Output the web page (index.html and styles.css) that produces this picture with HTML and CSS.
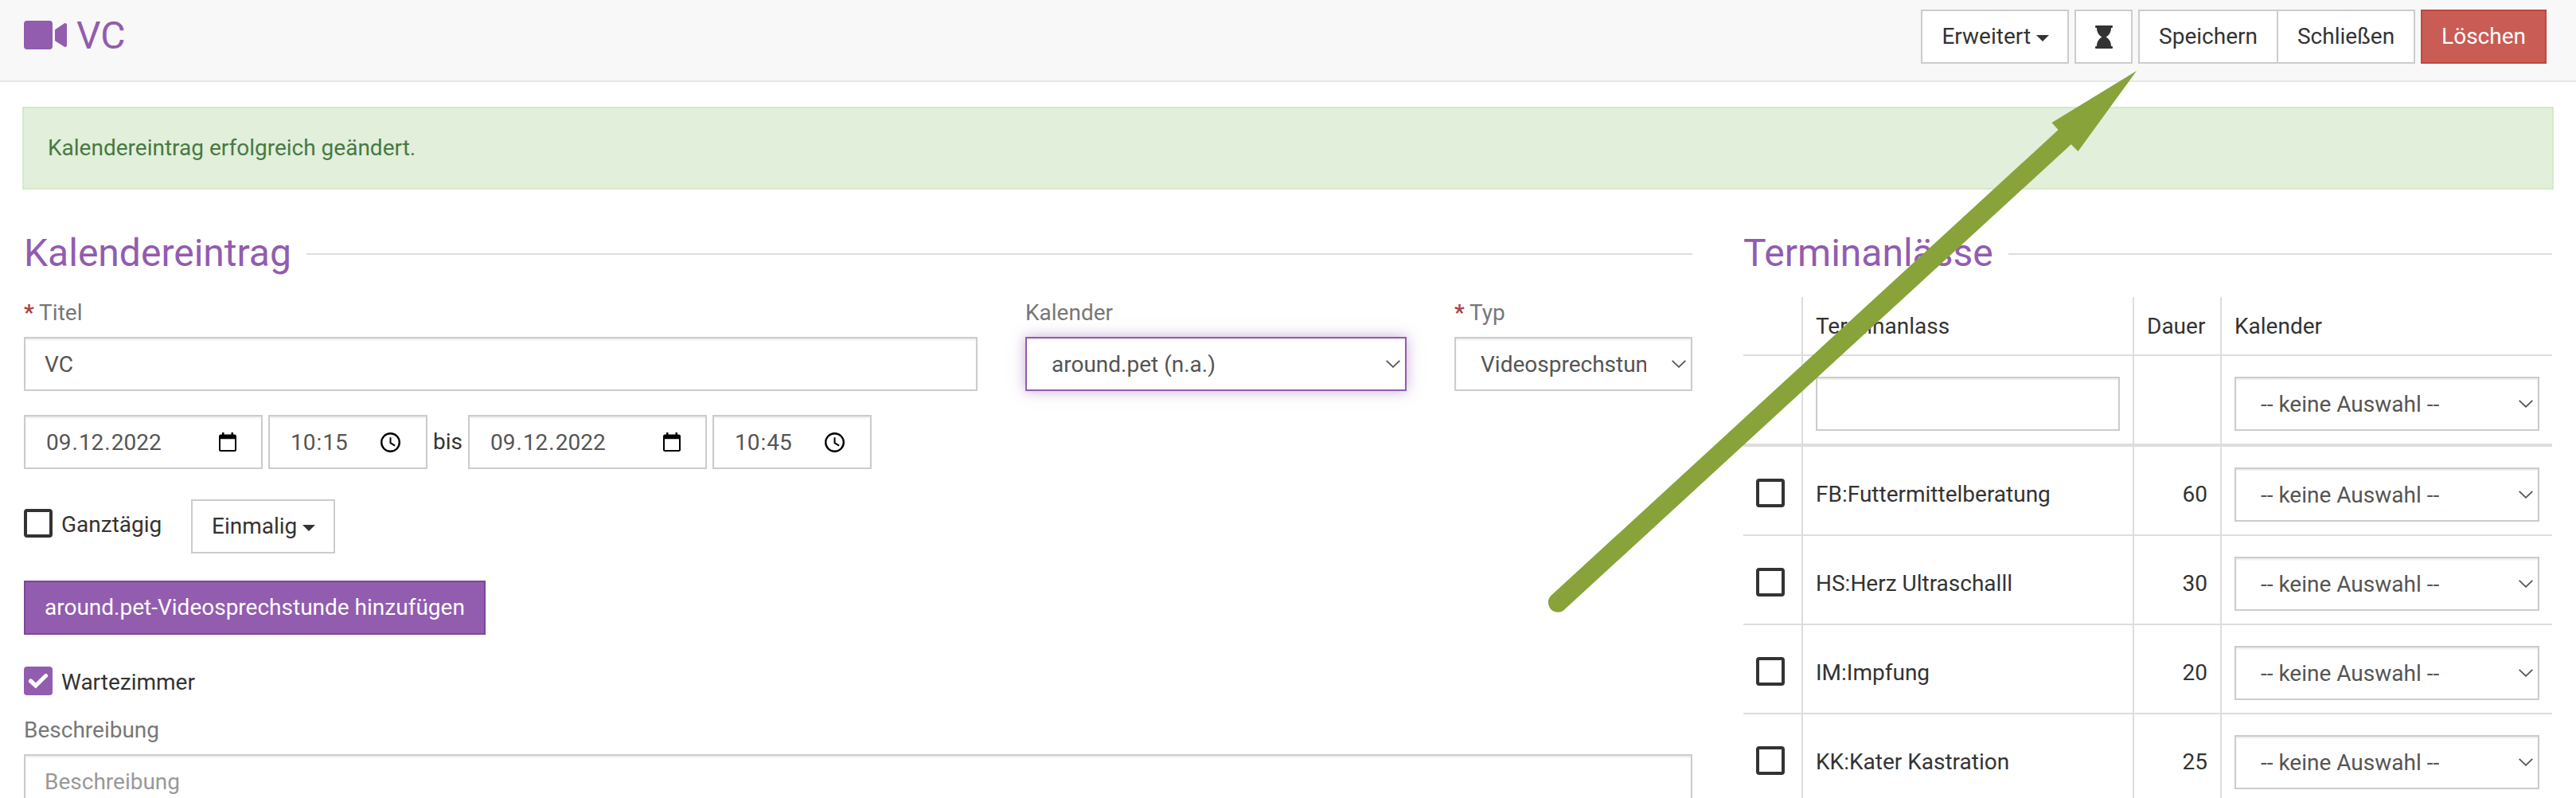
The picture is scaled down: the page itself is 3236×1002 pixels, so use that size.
FILE: index.html
```html
<!DOCTYPE html>
<html lang="de">
<head>
<meta charset="utf-8">
<title>VC</title>
<link rel="stylesheet" href="styles.css">
</head>
<body>
<svg class="defs" width="0" height="0">
  <symbol id="chevron" viewBox="0 0 18 10"><path d="M.7.8 9 8.8 17.300.8" fill="none" stroke="#555" stroke-width="1.8"/></symbol>
  <symbol id="date" viewBox="0 0 22 24"><path d="M4 0h2.500v2.500h9V0H18v2.500h1.500A2.500 2.500 0 0 1 22 5v16.500a2.500 2.500 0 0 1-2.500 2.500h-17A2.500 2.500 0 0 1 0 21.500V5a2.500 2.500 0 0 1 2.500-2.500H4zM2 8.300V22h18V8.300z"/></symbol>
  <symbol id="clock" viewBox="0 0 25 25"><circle cx="12.500" cy="12.500" r="11.300" fill="none" stroke="#000" stroke-width="2.400"/><path d="M12.500 6.200v7l5.600 3.500" fill="none" stroke="#000" stroke-width="2"/></symbol>
</svg>
<header class="topbar">
  <h1 class="brand">
    <svg width="54" height="36" viewBox="0 0 54 36"><rect width="36" height="36" rx="4"/><path d="M39 12.300a2 2 0 0 1 .8-1.600L50.500 3.500A2.200 2.200 0 0 1 54 5.300v25.400a2.200 2.200 0 0 1-3.500 1.800L39.800 25.800a2 2 0 0 1-.8-1.600z"/></svg>
    <span>VC</span>
  </h1>
  <div class="toolbar">
    <button class="btn">Erweitert<i class="caret"></i></button>
    <button class="btn btn-icon"><svg width="22" height="29" viewBox="0 0 22 29"><path d="M1.200 0h19.600a1.200 1.200 0 0 1 0 3H20c0 6-3 9.500-6.500 11.500C17 16.500 20 20 20 26h.8a1.200 1.200 0 0 1 0 3H1.200a1.200 1.200 0 0 1 0-3H2c0-6 3-9.500 6.500-11.500C5 12.500 2 9 2 3h-.8a1.200 1.200 0 0 1 0-3z" fill="#333"/></svg></button>
    <div class="group"><button class="btn">Speichern</button><button class="btn">Schließen</button></div>
    <button class="btn btn-danger">Löschen</button>
  </div>
</header>
<div class="alert">Kalendereintrag erfolgreich geändert.</div>
<main class="columns">
  <section class="entry">
    <h2 class="legend">Kalendereintrag</h2>
    <div class="fields">
      <div class="field"><label><b>*</b> Titel</label><div class="input">VC</div></div>
      <div class="field"><label>Kalender</label><div class="input select focused"><span>around.pet (n.a.)</span><svg class="chev"><use href="#chevron"/></svg></div></div>
      <div class="field"><label><b>*</b> Typ</label><div class="input select"><span>Videosprechstunde</span><svg class="chev"><use href="#chevron"/></svg></div></div>
    </div>
    <div class="period">
      <div class="input date"><span>09<i>.</i>12<i>.</i>2022</span><svg width="22" height="24"><use href="#date"/></svg></div>
      <div class="input time"><span>10<i>:</i>15</span><svg width="25" height="25"><use href="#clock"/></svg></div>
      <span class="until">bis</span>
      <div class="input date"><span>09<i>.</i>12<i>.</i>2022</span><svg width="22" height="24"><use href="#date"/></svg></div>
      <div class="input time"><span>10<i>:</i>45</span><svg width="25" height="25"><use href="#clock"/></svg></div>
    </div>
    <div class="repeat">
      <div class="check-row"><i class="check"></i><span>Ganztägig</span></div>
      <button class="btn">Einmalig<i class="caret"></i></button>
    </div>
    <button class="btn btn-primary">around.pet-Videosprechstunde hinzufügen</button>
    <div class="check-row waiting"><i class="check checked"><svg width="26" height="20" viewBox="0 0 26 20"><path d="m3.500 10 6.300 6L22.500 3.500" fill="none" stroke="#fff" stroke-width="5.200" stroke-linecap="round"/></svg></i><span>Wartezimmer</span></div>
    <label class="desc-label">Beschreibung</label>
    <div class="input textarea">Beschreibung</div>
  </section>
  <section class="reasons">
    <h2 class="legend">Terminanlässe</h2>
    <div class="table">
      <div class="row head"><div></div><div>Terminanlass</div><div>Dauer</div><div>Kalender</div></div>
      <div class="row filter"><div></div><div><div class="input"></div></div><div></div><div><div class="input select"><span>-- keine Auswahl --</span><svg class="chev"><use href="#chevron"/></svg></div></div></div>
      <div class="row"><div><i class="check"></i></div><div>FB:Futtermittelberatung</div><div class="num">60</div><div><div class="input select"><span>-- keine Auswahl --</span><svg class="chev"><use href="#chevron"/></svg></div></div></div>
      <div class="row"><div><i class="check"></i></div><div>HS:Herz Ultraschalll</div><div class="num">30</div><div><div class="input select"><span>-- keine Auswahl --</span><svg class="chev"><use href="#chevron"/></svg></div></div></div>
      <div class="row"><div><i class="check"></i></div><div>IM:Impfung</div><div class="num">20</div><div><div class="input select"><span>-- keine Auswahl --</span><svg class="chev"><use href="#chevron"/></svg></div></div></div>
      <div class="row"><div><i class="check"></i></div><div>KK:Kater Kastration</div><div class="num">25</div><div><div class="input select"><span>-- keine Auswahl --</span><svg class="chev"><use href="#chevron"/></svg></div></div></div>
    </div>
  </section>
</main>
<svg class="arrow" width="760" height="700" viewBox="1940 80 760 700"><path d="M1957 756.500 2596 170" stroke="#88a33a" stroke-width="24.300" stroke-linecap="round"/><path d="M2684 89 2577.500 154 2586 163.500 2602 181.500 2610.500 190z" fill="#88a33a"/></svg>
</body>
</html>
```
FILE: styles.css
```css
* { box-sizing: border-box; }
body {
  margin: 0;
  height: 1002px;
  overflow: hidden;
  position: relative;
  background: #fff;
  color: #333;
  font: 28px/40px Roboto, "Liberation Sans", sans-serif;
}
.defs { position: absolute; }
svg { display: block; flex: none; }
.topbar {
  height: 103px;
  padding: 12px 37px 0 30px;
  display: flex;
  justify-content: space-between;
  background: #f8f8f8;
  border-bottom: 2px solid #e7e7e7;
}
.brand {
  margin: 0;
  height: 66px;
  display: flex;
  align-items: center;
  gap: 12px;
  font-size: 48px;
  font-weight: 400;
  line-height: 66px;
  color: #925caf;
}
.brand svg { fill: #925caf; margin-top: -2px; }
.toolbar { display: flex; gap: 7px; }
.group { display: flex; }
.group .btn + .btn { margin-left: -2px; }
.btn {
  height: 68px;
  padding: 0 24px;
  display: flex;
  align-items: center;
  flex: none;
  border: 2px solid #ccc;
  background: #fff;
  color: #333;
  font: inherit;
  white-space: nowrap;
}
.btn-icon { width: 73px; }
.btn-danger { background: #c95c54; border-color: #c0473e; color: #fff; }
.btn-primary { background: #925caf; border-color: #7d4599; color: #fff; margin-top: 34px; }
.caret {
  margin: 4px -1px 0 7px;
  border: 8px solid transparent;
  border-top-color: #333;
  border-bottom: 0;
}
.alert {
  margin: 31px 28px 0;
  height: 104px;
  padding: 0 30px;
  border: 2px solid #d6e9c6;
  background: #e1efdb;
  color: #477942;
  line-height: 100px;
}
.columns {
  display: grid;
  grid-template-columns: 2096px 1016px;
  gap: 64px;
  height: 764px;
  overflow: hidden;
  padding: 45px 30px 0;
}
.legend {
  margin: 0;
  height: 70px;
  display: flex;
  align-items: center;
  gap: 19px;
  color: #925caf;
  font-size: 48px;
  font-weight: 400;
  line-height: 70px;
}
.legend::after { content: ""; flex: 1; height: 2px; margin-top: 2px; background: #ddd; }
.fields {
  display: grid;
  grid-template-columns: 1198px 479px 299px;
  gap: 60px;
  padding-top: 20px;
}
label { display: block; height: 50px; line-height: 40px; color: #777; }
label b { color: #a94442; }
.input {
  height: 68px;
  padding: 0 24px;
  border: 2px solid #ccc;
  box-shadow: inset 0 2px 2px rgba(0, 0, 0, .075);
  background: #fff;
  color: #555;
  line-height: 65px;
  white-space: nowrap;
}
.select { display: flex; align-items: center; justify-content: space-between; padding: 0 6px 0 31px; }
.select span { overflow: hidden; margin-right: 32px; }
.chev { width: 18px; height: 10px; }
.focused {
  border-color: #925caf;
  box-shadow: inset 0 2px 2px rgba(0, 0, 0, .075), 0 0 16px rgba(146, 92, 175, .5);
}
.period { display: flex; gap: 7px; margin-top: 30px; line-height: 67px; }
.period i { margin: 0 1px; font-style: normal; }
.date, .time { display: flex; align-items: center; justify-content: space-between; padding-left: 26px; }
.date { width: 300px; padding-right: 31px; }
.time { width: 200px; padding-right: 32px; }
.until { width: 37px; text-align: center; }
.repeat { display: flex; gap: 38px; margin-top: 38px; }
.check-row { display: flex; align-items: center; gap: 11px; width: 172px; height: 64px; }
.check-row .check { margin-top: -4px; }
.check {
  display: flex;
  align-items: center;
  justify-content: center;
  flex: none;
  width: 36px;
  height: 36px;
  border: 4px solid #333;
  border-radius: 4px;
}
.checked { background: #925caf; border-color: #925caf; }
.waiting { margin-top: 28px; }
.desc-label { margin-top: 8px; }
.textarea { height: 120px; color: #999; }
.table { margin-top: 20px; }
.row {
  display: grid;
  grid-template-columns: 75px 416px 110px 1fr;
  height: 112px;
  border-bottom: 2px solid #ddd;
  line-height: 67px;
}
.row > div { padding: 26px 16px 0; border-right: 2px solid #ddd; white-space: nowrap; }
.row > div:last-child { border-right: 0; }
.row > div:first-child { padding: 40px 0 0 16px; }
.row > .num { text-align: right; }
.row.head { height: 74px; }
.row.head > div { padding-top: 3px; }
.row.filter { height: 114px; border-bottom-width: 4px; }
.arrow { position: absolute; left: 1940px; top: 80px; }
```
